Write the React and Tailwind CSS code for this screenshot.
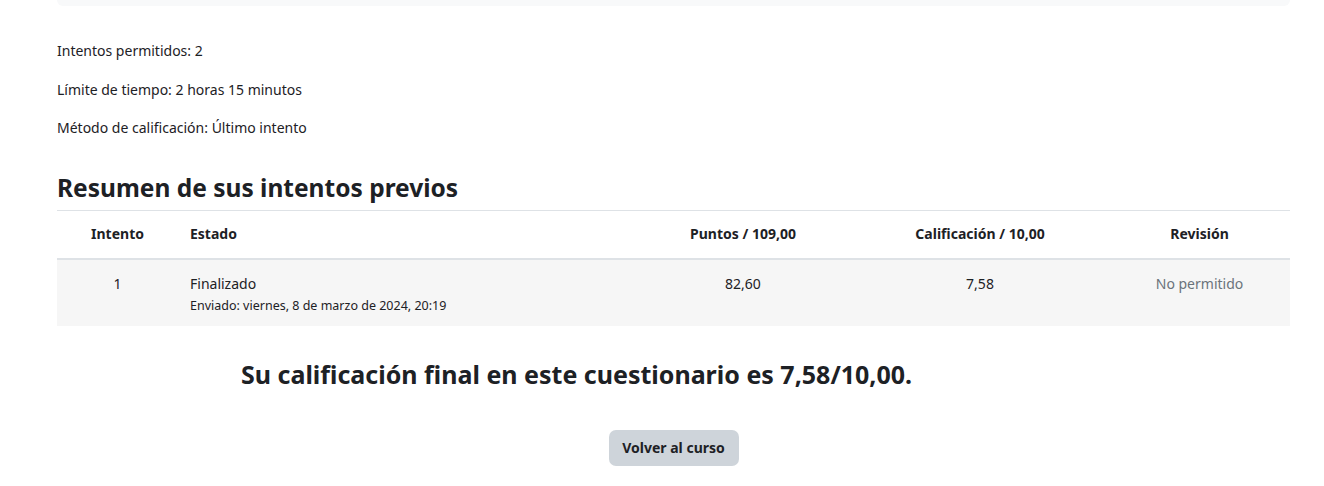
export default function App() {
  const font = { fontFamily: '"Noto Sans", "Open Sans", sans-serif' };
  return (
    <div className="w-[1324px] h-[486px] bg-white text-[#1d2125] text-[14px] leading-[22.5px]" style={font}>
      <div className="ml-[57px] w-[1233px]">
        <div className="h-[6px] bg-[#f8f9fa] rounded-b-[8px] w-[1233px]"></div>
        <div className="pt-[34px]">
          <p className="mb-[16px]">Intentos permitidos: 2</p>
          <p className="mb-[16px]">Límite de tiempo: 2 horas 15 minutos</p>
          <p className="mb-[16px]">Método de calificación: Último intento</p>
        </div>
        <h3 className="text-[24.5px] leading-[32px] font-bold mt-[32px] mb-[6px]">Resumen de sus intentos previos</h3>
        <table className="w-[1233px] border-collapse table-fixed">
          <colgroup>
            <col className="w-[121px]" />
            <col className="w-[457px]" />
            <col className="w-[216px]" />
            <col className="w-[258px]" />
            <col className="w-[181px]" />
          </colgroup>
          <thead>
            <tr className="border-t border-[#dee2e6] border-b-2 border-b-[#dee2e6]">
              <th className="font-bold text-center px-3 h-[49px] text-[14px]">Intento</th>
              <th className="font-bold text-left px-3 text-[14px]">Estado</th>
              <th className="font-bold text-center px-3 text-[14px]">Puntos / 109,00</th>
              <th className="font-bold text-center px-3 text-[14px]">Calificación / 10,00</th>
              <th className="font-bold text-center px-3 text-[14px]">Revisión</th>
            </tr>
          </thead>
          <tbody>
            <tr className="bg-[#f6f6f6] align-top">
              <td className="text-center px-3 pt-[13px] h-[67px] text-[14px]">1</td>
              <td className="px-3 pt-[13px] text-[14px]">
                <div>Finalizado</div>
                <div className="text-[12.5px] leading-[20px]">Enviado: viernes, 8 de marzo de 2024, 20:19</div>
              </td>
              <td className="text-center px-3 pt-[13px] text-[14px]">82,60</td>
              <td className="text-center px-3 pt-[13px] text-[14px]">7,58</td>
              <td className="text-center px-3 pt-[13px] text-[14px] text-[#6a737b]">No permitido</td>
            </tr>
          </tbody>
        </table>
        <div className="pl-[184px] pt-[30px]">
          <h3 className="text-[25px] leading-[36px] font-bold">Su calificación final en este cuestionario es 7,58/10,00.</h3>
        </div>
        <div className="flex justify-center pt-[38px]">
          <button className="bg-[#ced4da] rounded-[7px] w-[130px] h-[36px] font-bold text-[14px] text-[#1d2125]">Volver al curso</button>
        </div>
      </div>
    </div>
  );
}
